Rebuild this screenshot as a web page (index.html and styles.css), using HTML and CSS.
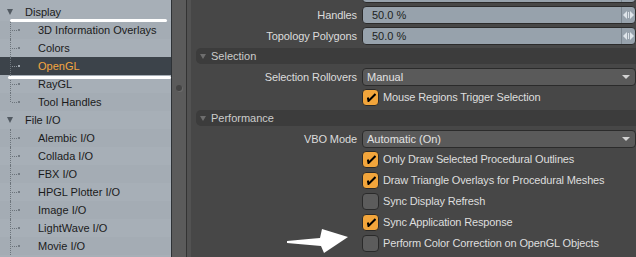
FILE: index.html
```html
<!DOCTYPE html>
<html>
<head>
    <title>Preferences - OpenGL</title>
    <link rel="stylesheet" href="styles.css">
</head>
<body>
    <div class="window">
        <div class="tree">
            <div class="node parent"><span class="twisty"></span>Display</div>
            <div class="node child">3D Information Overlays</div>
            <div class="node child">Colors</div>
            <div class="node child selected">OpenGL</div>
            <div class="node child">RayGL</div>
            <div class="node child last">Tool Handles</div>
            <div class="node parent"><span class="twisty"></span>File I/O</div>
            <div class="node child">Alembic I/O</div>
            <div class="node child">Collada I/O</div>
            <div class="node child">FBX I/O</div>
            <div class="node child">HPGL Plotter I/O</div>
            <div class="node child">Image I/O</div>
            <div class="node child">LightWave I/O</div>
            <div class="node child">Movie I/O</div>
        </div>

        <div class="splitter"><span class="grip"></span></div>

        <div class="props">
            <div class="row clipped">
                <label></label>
                <div class="field"><span class="value"></span><span class="spin"></span></div>
            </div>
            <div class="row">
                <label>Handles</label>
                <div class="field"><span class="value">50.0 %</span><span class="spin"><svg width="11" height="8" viewBox="0 0 11 8"><path d="M4 0 L0 4 L4 8 Z M7 0 L11 4 L7 8 Z M5 1 H6 V7 H5 Z" fill="#dfe5ea"/></svg></span></div>
            </div>
            <div class="row">
                <label>Topology Polygons</label>
                <div class="field"><span class="value">50.0 %</span><span class="spin"><svg width="11" height="8" viewBox="0 0 11 8"><path d="M4 0 L0 4 L4 8 Z M7 0 L11 4 L7 8 Z M5 1 H6 V7 H5 Z" fill="#dfe5ea"/></svg></span></div>
            </div>

            <div class="section"><div class="bar"><span class="twisty"></span>Selection</div></div>
            <div class="row">
                <label>Selection Rollovers</label>
                <div class="dropdown"><span class="value">Manual</span><span class="arrow"></span></div>
            </div>
            <div class="row">
                <label></label>
                <div class="check on">Mouse Regions Trigger Selection</div>
            </div>

            <div class="section"><div class="bar"><span class="twisty"></span>Performance</div></div>
            <div class="row">
                <label>VBO Mode</label>
                <div class="dropdown"><span class="value">Automatic (On)</span><span class="arrow"></span></div>
            </div>
            <div class="row">
                <label></label>
                <div class="check on">Only Draw Selected Procedural Outlines</div>
            </div>
            <div class="row">
                <label></label>
                <div class="check on">Draw Triangle Overlays for Procedural Meshes</div>
            </div>
            <div class="row">
                <label></label>
                <div class="check">Sync Display Refresh</div>
            </div>
            <div class="row">
                <label></label>
                <div class="check on">Sync Application Response</div>
            </div>
            <div class="row">
                <label></label>
                <div class="check">Perform Color Correction on OpenGL Objects</div>
            </div>
        </div>

        <!-- annotations drawn on top of the screenshot -->
        <div class="mark mark-top"></div>
        <div class="mark mark-bottom"></div>
        <svg class="pointer" width="70" height="30" viewBox="0 0 70 30">
            <path d="M1 12 C12 11 22 10 34 9 L36 0 L62 8 L38 24 L35 17 C24 16 12 15 1 14 Z" fill="#ffffff"/>
        </svg>
    </div>
</body>
</html>
```

FILE: styles.css
```css
body {
    margin: 0;
    background: #474747;
    font-family: "Liberation Sans", Arial, sans-serif;
    font-size: 11px;
}
.window {
    position: relative;
    display: flex;
    width: 636px;
    height: 257px;
    overflow: hidden;
}

/* left tree */
.tree {
    width: 171px;
    padding-top: 3px;
    background: #a7afb7;
    border-right: 1px solid #2e3236;
    color: #1b1b1b;
}
.node {
    position: relative;
    height: 18px;
    line-height: 18px;
    white-space: nowrap;
}
.node:nth-child(even) {
    background: #a4acb4;
}
.parent {
    padding-left: 25px;
}
.parent .twisty {
    position: absolute;
    left: 7px;
    top: 6px;
    border-left: 3px solid transparent;
    border-right: 3px solid transparent;
    border-top: 6px solid #525a62;
}
.child {
    padding-left: 38px;
}
.child::before {
    content: "";
    position: absolute;
    left: 10px;
    top: 0;
    bottom: 0;
    border-left: 1px dotted #6c747b;
}
.child.last::before {
    bottom: 9px;
}
.child::after {
    content: "";
    position: absolute;
    left: 11px;
    top: 8px;
    width: 9px;
    height: 2px;
    background:
        linear-gradient(#737b83, #737b83) right top / 2px 2px no-repeat,
        repeating-linear-gradient(to right, transparent 0 1px, #6c747b 1px 2px) left bottom / 6px 1px no-repeat;
}
.child.selected {
    background: #3c434a;
    color: #f4a640;
}
.child.selected::after {
    background:
        linear-gradient(#a0a8b0, #a0a8b0) right top / 2px 2px no-repeat,
        repeating-linear-gradient(to right, transparent 0 1px, #8a9299 1px 2px) left bottom / 6px 1px no-repeat;
}

/* splitter between tree and properties */
.splitter {
    position: relative;
    width: 14px;
    background: #5b5b5b;
    border-right: 1px solid #333333;
}
.grip {
    position: absolute;
    left: 4px;
    top: 85px;
    width: 6px;
    height: 6px;
    border-radius: 50%;
    background: #444444;
    box-shadow: 1px 1px 0 #6a6a6a;
}

/* property list */
.props {
    flex: 1;
    padding-top: 4px;
    box-shadow: inset 4px 0 0 #525252;
    color: #dcdcdc;
}
.row {
    display: grid;
    grid-template-columns: 1fr 274px;
    align-items: center;
    height: 21px;
}
.row.clipped {
    margin-top: -21px;
}
.row label {
    text-align: right;
    padding-right: 5px;
    white-space: nowrap;
    letter-spacing: -0.1px;
}
.field,
.dropdown {
    display: flex;
    align-items: center;
    height: 16px;
    border: 1px solid #2b2b2b;
    border-radius: 4px;
}
.field {
    background: #97a2ac;
    color: #1d1f21;
}
.field .value {
    flex: 1;
    padding-left: 9px;
}
.spin {
    display: flex;
    align-items: center;
    justify-content: center;
    width: 13px;
    height: 16px;
    border-left: 1px solid #7b858e;
}
.dropdown {
    background: #5a5a5a;
    color: #e2e2e2;
}
.dropdown .value {
    flex: 1;
    padding-left: 4px;
}
.arrow {
    margin-right: 5px;
    border-left: 4px solid transparent;
    border-right: 4px solid transparent;
    border-top: 4px solid #d2d2d2;
}

/* check boxes */
.check {
    position: relative;
    padding-left: 21px;
    line-height: 17px;
    white-space: nowrap;
    letter-spacing: -0.15px;
    color: #dedede;
}
.check::before {
    content: "";
    position: absolute;
    left: 0;
    top: 0;
    width: 15px;
    height: 15px;
    border: 1px solid #2a2a2a;
    border-radius: 4px;
    background: #5c5c5c;
}
.check.on::before {
    background: #f2a53b;
}
.check.on::after {
    content: "";
    position: absolute;
    left: 5px;
    top: 4px;
    width: 9px;
    height: 9px;
    background: url("data:image/svg+xml,%3Csvg xmlns='http://www.w3.org/2000/svg' width='9' height='9' viewBox='0 0 9 9'%3E%3Cpath d='M0.8 4.5 L1.5 8 L8.5 1' stroke='%23000' stroke-width='2' fill='none'/%3E%3C/svg%3E") no-repeat;
}

/* section headers */
.section {
    display: flex;
    align-items: center;
    height: 20px;
    padding-left: 9px;
}
.bar {
    flex: 1;
    display: flex;
    align-items: center;
    height: 16px;
    background: #3c3c3c;
    border-radius: 5px 0 0 5px;
    color: #cccccc;
}
.bar .twisty {
    margin: 0 5px 0 4px;
    border-left: 3px solid transparent;
    border-right: 3px solid transparent;
    border-top: 5px solid #6e6e6e;
}

/* annotation overlays */
.mark {
    position: absolute;
    height: 3px;
    border-radius: 2px;
    background: #ffffff;
}
.mark-top {
    left: 10px;
    top: 19px;
    width: 157px;
}
.mark-bottom {
    left: 8px;
    top: 76px;
    width: 163px;
}
.pointer {
    position: absolute;
    left: 286px;
    top: 229px;
}
```
